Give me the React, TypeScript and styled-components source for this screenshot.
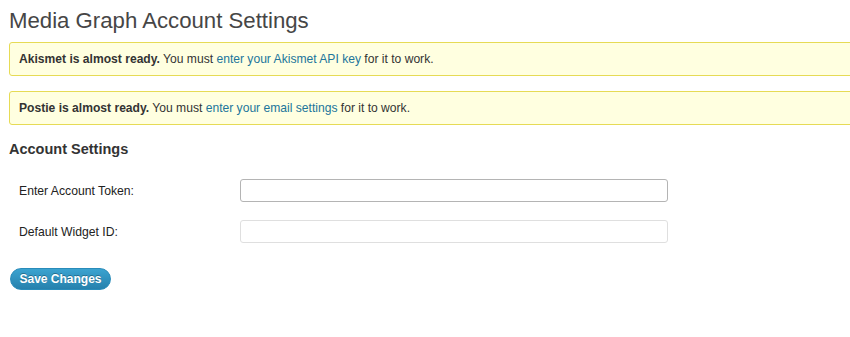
import React from "react";
import styled, { createGlobalStyle } from "styled-components";

const Global = createGlobalStyle`
  html, body { margin: 0; padding: 0; background: #fff; }
  body { font-family: "Liberation Sans", Arial, sans-serif; color: #333; font-size: 12px; }
  * { box-sizing: border-box; }
`;

const Page = styled.div`
  width: 850px;
  height: 337px;
  overflow: hidden;
  padding: 0 0 0 9px;
`;

const Title = styled.h2`
  margin: 0;
  padding: 6px 0 0 0;
  height: 42px;
  font-size: 22.2px;
  font-weight: normal;
  color: #464646;
  line-height: 29px;
`;

const Notice = styled.div<{ $gap?: number }>`
  margin: 0 -20px ${(p) => p.$gap ?? 0}px 0;
  height: 34px;
  background: #ffffe0;
  border: 1px solid #e6db55;
  border-radius: 3px;
  padding: 0 9px;
  display: flex;
  align-items: center;
  font-size: 12.1px;
  color: #333;
`;

const Strong = styled.strong`
  font-weight: bold;
`;

const Link = styled.a`
  color: #21759b;
  text-decoration: none;
`;

const SectionTitle = styled.h3`
  margin: 14px 0 0 0;
  font-size: 14.5px;
  font-weight: bold;
  color: #333;
  line-height: 20px;
`;

const Form = styled.div`
  display: flex;
  flex-direction: column;
  gap: 18px;
  margin-top: 20px;
`;

const Row = styled.div`
  display: flex;
  align-items: center;
`;

const Label = styled.label`
  width: 231px;
  padding-left: 10px;
  font-size: 12.2px;
  color: #222;
`;

const Input = styled.input<{ $dark?: boolean }>`
  width: 428px;
  height: 23px;
  border: 1px solid ${(p) => (p.$dark ? "#b4b4b4" : "#dfdfdf")};
  border-radius: 3px;
  background: #fff;
  margin: 0;
  padding: 0 4px;
  outline: none;
`;

const Button = styled.button`
  margin-top: 25px;
  margin-left: 1px;
  height: 22px;
  width: 101px;
  border-radius: 11px;
  border: 1px solid #298cba;
  background: linear-gradient(to bottom, #3ba3d0, #2681ad);
  color: #fff;
  font-family: "Liberation Sans", Arial, sans-serif;
  font-size: 12px;
  font-weight: bold;
  text-shadow: 0 -1px 0 rgba(0, 0, 0, 0.3);
  padding: 0;
  cursor: pointer;
`;

export default function App() {
  return (
    <Page>
      <Global />
      <Title>Media Graph Account Settings</Title>
      <Notice $gap={15}>
        <span>
          <Strong>Akismet is almost ready.</Strong> You must{" "}
          <Link href="#">enter your Akismet API key</Link> for it to work.
        </span>
      </Notice>
      <Notice>
        <span>
          <Strong>Postie is almost ready.</Strong> You must{" "}
          <Link href="#">enter your email settings</Link> for it to work.
        </span>
      </Notice>
      <SectionTitle>Account Settings</SectionTitle>
      <Form>
        <Row>
          <Label>Enter Account Token:</Label>
          <Input $dark />
        </Row>
        <Row>
          <Label>Default Widget ID:</Label>
          <Input />
        </Row>
      </Form>
      <Button>Save Changes</Button>
    </Page>
  );
}
